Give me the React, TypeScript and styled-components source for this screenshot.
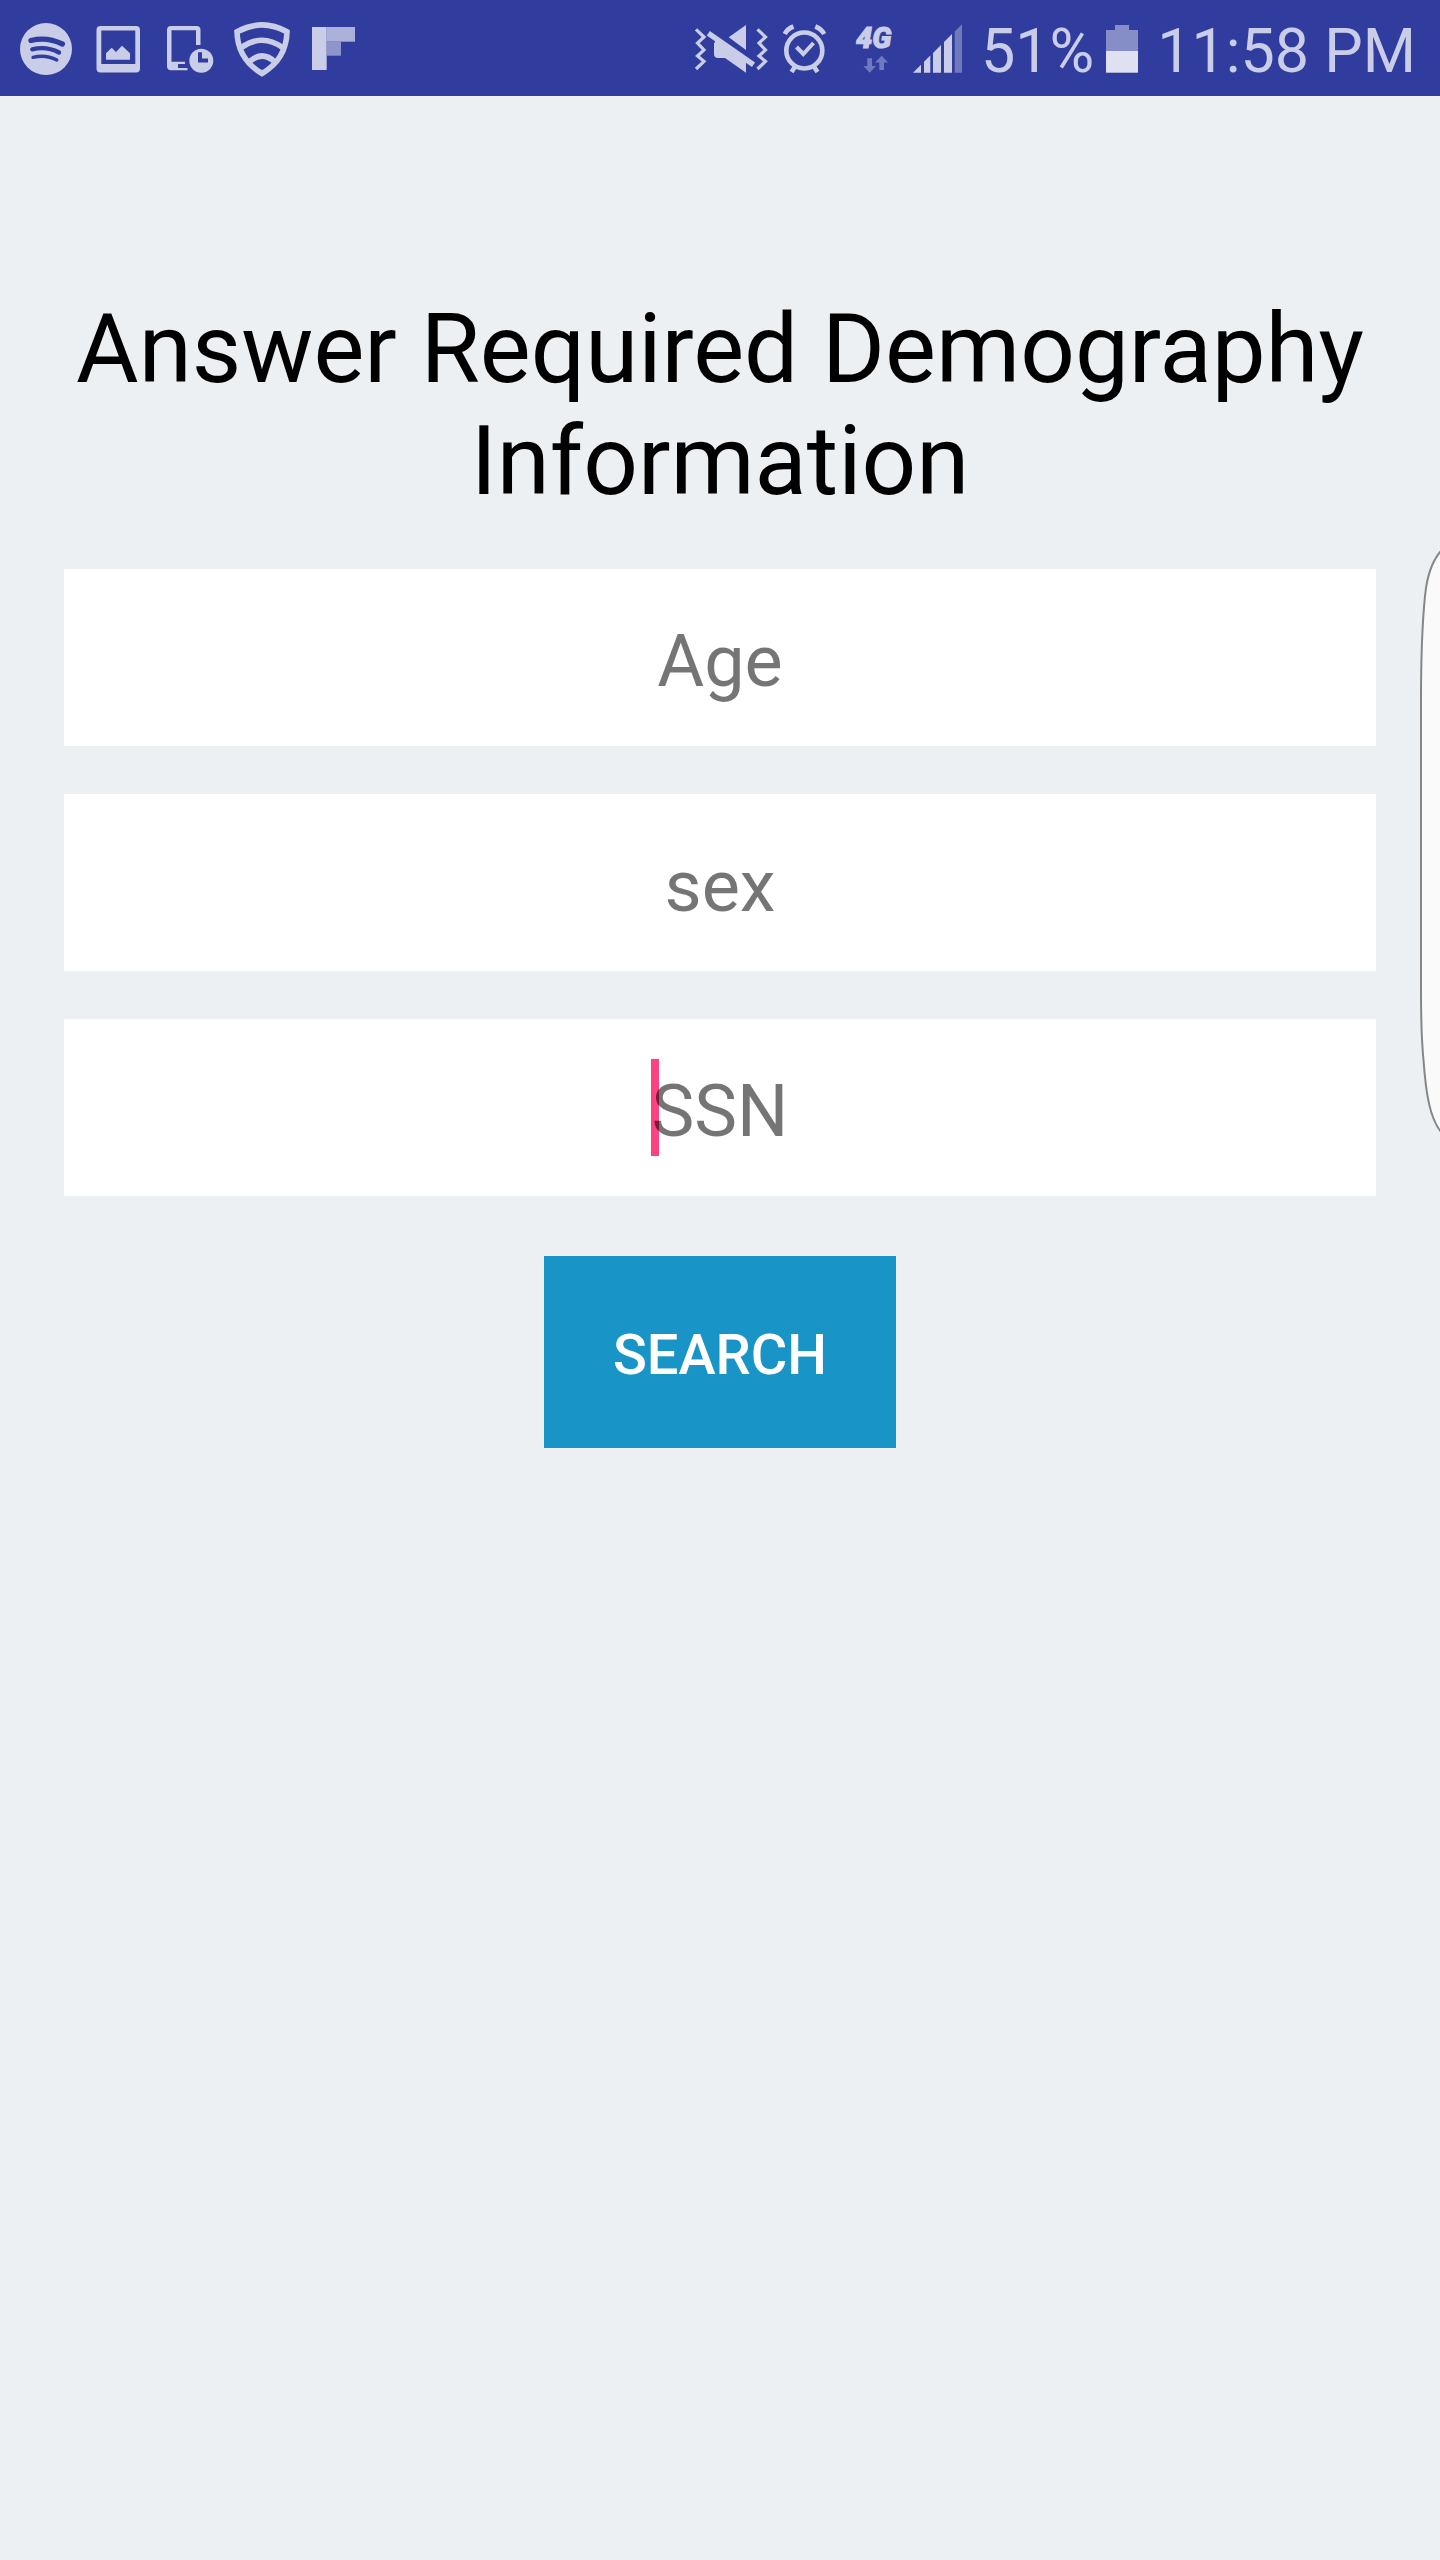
import React from "react";
import styled, { createGlobalStyle } from "styled-components";

const GlobalStyle = createGlobalStyle`
  *, *::before, *::after { box-sizing: border-box; }
  body {
    margin: 0;
    background: #ecf0f3;
    font-family: Roboto, "Liberation Sans", sans-serif;
  }
`;

const Page = styled.div`
  position: relative;
  min-height: 100vh;
  display: flex;
  flex-direction: column;
  overflow: hidden;
`;

const StatusBar = styled.header`
  display: flex;
  justify-content: space-between;
  align-items: center;
  height: 96px;
  padding: 0 24px 0 18px;
  background: #303d9e;
  color: #c9cde8;
`;

const StatusGroup = styled.div<{ $gap: number }>`
  display: flex;
  align-items: center;
  gap: ${(p) => p.$gap}px;
`;

const Glyph = styled.svg`
  display: block;
  flex: none;
  height: 60px;
  fill: currentColor;
`;

const StatusText = styled.span`
  font-size: 61px;
  line-height: 72px;
  padding-top: 6px;
  white-space: nowrap;
`;

const Content = styled.main`
  display: flex;
  flex-direction: column;
  align-items: center;
  padding: 197px 64px 64px;
`;

const Title = styled.h1`
  margin: 0 0 52px;
  font-size: 96px;
  line-height: 112px;
  font-weight: 400;
  text-align: center;
  color: #000;
`;

const Form = styled.form`
  align-self: stretch;
  display: flex;
  flex-direction: column;
  align-items: center;
  gap: 48px;
`;

const Field = styled.div`
  position: relative;
  width: 100%;
  background: #fff;
`;

const FieldInput = styled.input`
  position: relative;
  display: block;
  width: 100%;
  height: 177px;
  padding: 8px 16px 0;
  border: 0;
  border-radius: 0;
  outline: 0;
  background: transparent;
  font: inherit;
  font-size: 72px;
  text-align: center;
  color: #000;
  caret-color: #ff4081;
  &::placeholder {
    color: rgba(0, 0, 0, 0.54);
    opacity: 1;
  }
`;

const Caret = styled.span`
  position: absolute;
  top: 40px;
  bottom: 40px;
  left: calc(50% - 69px);
  width: 8px;
  background: #ff4081;
`;

const SearchButton = styled.button`
  width: 352px;
  height: 192px;
  margin-top: 12px;
  padding: 6px 0 0;
  border: 0;
  border-radius: 0;
  background: #1895c6;
  font: inherit;
  font-size: 56px;
  font-weight: 500;
  color: #fff;
`;

const EdgePanel = styled.svg`
  position: absolute;
  top: 550px;
  right: 0;
  width: 20px;
  height: 584px;
`;

type IconProps = { x: number; width: number; children: React.ReactNode };

function Icon({ x, width, children }: IconProps) {
  return (
    <Glyph width={width} height={60} viewBox={`${x} 18 ${width} 60`} aria-hidden="true">
      {children}
    </Glyph>
  );
}

const line = { fill: "none", stroke: "currentColor" };
const cut = "#303d9e";

function Notifications() {
  return (
    <StatusGroup $gap={20}>
      <Icon x={18} width={56}>
        <circle cx="46" cy="49" r="26" />
        <g fill="none" stroke={cut} strokeLinecap="round">
          <path d="M31 40.5Q47 36.5 62.3 44" strokeWidth="5.4" />
          <path d="M32.3 49.3Q46.5 45.8 59 52.5" strokeWidth="4.4" />
          <path d="M33 57.3Q46 54.3 56.8 60" strokeWidth="3.3" />
        </g>
      </Icon>
      <Icon x={94} width={48}>
        <path
          fillRule="evenodd"
          d="M100.5 26H136q4 0 4 4V68.5q0 4-4 4H100.5q-4 0-4-4V30q0-4 4-4ZM101.3 30.6V64H135.3V30.6Z"
        />
        <path d="M106 59.7V53.3L111.7 47.7L116 52L122 45.7L130 53.3V59.7Z" />
      </Icon>
      <Icon x={162} width={52}>
        <path d="M171 26H196.5q4 0 4 4V45H196V30.3H171.5V61.7H185V64H178V68H187.5V70.3H171q-4 0-4-4V30q0-4 4-4Z" />
        <circle cx="201.3" cy="60.7" r="12" />
        <path d="M198 52.3H202V58.5H208V62.6H198Z" fill={cut} />
      </Icon>
      <Icon x={234} width={56}>
        <g {...line} strokeWidth="5.6">
          <path d="M237 31.8Q262 18 287 31.8C286.5 51 276.5 65 262 73.5C247.5 65 237.5 51 237 31.8Z" />
          <path d="M241.5 47.5Q262 33 282.5 47.5" />
          <path d="M249.5 61.5Q262 50.5 274.5 61.5" />
        </g>
      </Icon>
      <Icon x={310} width={46}>
        <path d="M312 27H326.7V70H312Z" />
        <path d="M326.7 27H355V41.7H326.7Z" fill="#abb1d9" />
        <path d="M326.7 41.7H341V55.7H326.7Z" fill="#8f95ca" />
      </Icon>
    </StatusGroup>
  );
}

function SystemStatus() {
  return (
    <StatusGroup $gap={12}>
      <Icon x={694} width={74}>
        <path
          {...line}
          strokeWidth="3.2"
          d="M696 29.3L704 37L697.5 43L704 50L697.5 56L704 61.3L696 69M757.5 29.3L765.5 37L759 43L765.5 50L759 56L765.5 61.3L757.5 69"
        />
        <path {...line} strokeWidth="5.4" d="M708.3 33.2L753.5 64.8" />
        <path d="M728.7 37.3L746 25V50Z" />
        <path d="M715.5 40.7L746 62V72.7L725 58H718q-4 0-4-4V43.5Z" />
      </Icon>
      <Icon x={780} width={50}>
        <g {...line}>
          <circle cx="804.3" cy="50.5" r="18" strokeWidth="4.6" />
          <path d="M796.5 47L803.3 54L813.5 43" strokeWidth="4" />
          <path d="M784.8 34Q787 29 793.5 26.5M815.3 26.5Q821.5 29 824.2 34" strokeWidth="4.6" />
          <path d="M795.5 66L791.5 72M813.5 66L817.5 72" strokeWidth="4.6" />
        </g>
      </Icon>
      <Icon x={842} width={58}>
        <text x="856" y="48" fontSize="29" fontWeight="900" fontStyle="italic" stroke="currentColor" strokeWidth="1">
          4G
        </text>
        <path
          opacity="0.42"
          d="M867.3 58.3H872V66H876L869.7 72.7L863.3 66H867.3ZM879.3 70V62.5H875L881.7 55.7L888 62.5H884V70Z"
        />
      </Icon>
      <Icon x={912} width={57}>
        <path d="M913 72.7L921 64.8V72.7ZM924 72.7V61.8L930.3 55.5V72.7ZM933 72.7V53L941 45V72.7ZM944 72.7V42L952 34V72.7Z" />
        <path d="M954.7 72.7V31.5L962 24.3V72.7Z" opacity="0.42" />
      </Icon>
      <StatusText>51%</StatusText>
      <Icon x={1106} width={39}>
        <path d="M1106 51V30H1115V25H1129V30H1138V51Z" fill="#868ec7" />
        <path d="M1106 51H1138V72.7H1106Z" fill="#dfe1f1" />
      </Icon>
      <StatusText>11:58 PM</StatusText>
    </StatusGroup>
  );
}

export default function App() {
  return (
    <>
      <GlobalStyle />
      <Page>
        <StatusBar>
          <Notifications />
          <SystemStatus />
        </StatusBar>
        <Content>
          <Title>Answer Required Demography Information</Title>
          <Form onSubmit={(event) => event.preventDefault()}>
            <Field>
              <FieldInput type="text" inputMode="numeric" placeholder="Age" aria-label="Age" />
            </Field>
            <Field>
              <FieldInput type="text" placeholder="sex" aria-label="sex" />
            </Field>
            <Field>
              <Caret />
              <FieldInput type="text" inputMode="numeric" placeholder="SSN" aria-label="SSN" />
            </Field>
            <SearchButton type="submit">SEARCH</SearchButton>
          </Form>
        </Content>
        <EdgePanel viewBox="0 0 20 584" aria-hidden="true">
          <path
            d="M21 1C12 11 7 26 5 46C3 66 1 90 1 150V440C1 480 2 495 3.5 510C6 545 10 568 21 582"
            fill="#fafafa"
            stroke="#858787"
            strokeWidth="2"
          />
        </EdgePanel>
      </Page>
    </>
  );
}
